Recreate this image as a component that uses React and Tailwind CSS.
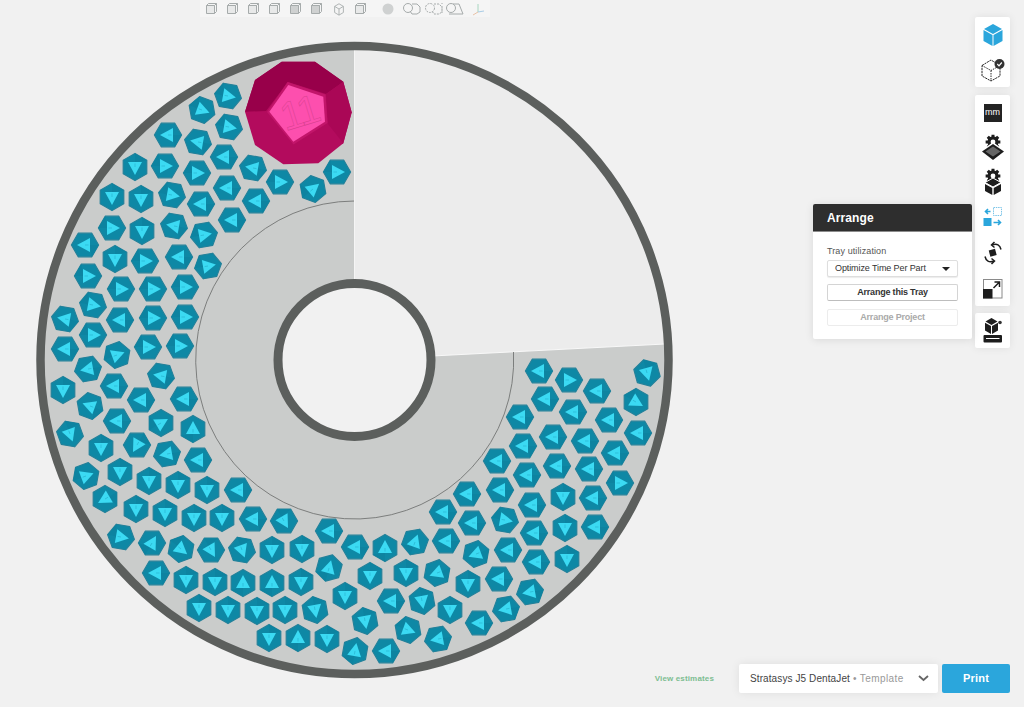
import React from "react";

const L = 180, R = 0, D = 90, U = 270;
const parts = [
  [228,96,10],[202,110,20],[229,127,10],[168,135,L],[198,142,190],[224,157,L],[253,168,190],[280,182,R],[313,189,320],[337,172,R],
  [135,167,D],[165,166,R],[197,173,R],[227,188,L],[256,201,L],[112,197,D],[141,199,D],[172,195,10],[201,204,L],[232,220,L],
  [112,228,R],[142,231,D],[174,226,190],[204,235,350],[85,245,L],[115,259,D],[145,261,R],[179,257,L],[208,266,350],[88,276,R],
  [121,289,R],[153,289,R],[185,287,R],[93,305,10],[120,320,L],[153,318,R],[185,317,R],[65,319,190],[93,335,R],[65,349,L],
  [117,355,340],[148,347,R],[180,346,R],[88,369,170],[161,376,190],[114,386,L],[63,390,D],[141,400,L],[184,399,L],[90,406,200],
  [117,421,L],[161,423,330],[193,429,U],[70,434,70],[101,448,D],[137,445,120],[167,454,170],[198,460,L],[86,476,340],[120,472,D],
  [149,481,D],[178,485,D],[207,490,D],[238,490,L],[105,499,150],[136,509,D],[165,513,D],[194,518,D],[222,518,D],[253,519,L],
  [284,521,60],[121,537,10],[152,543,300],[181,549,40],[211,550,60],[242,550,70],[272,550,D],[302,549,D],[329,531,L],[355,547,L],
  [156,573,L],[186,580,D],[215,582,D],[243,583,U],[272,583,U],[301,582,D],[329,568,285],[370,576,D],[199,608,D],[228,610,D],
  [257,611,D],[285,610,D],[315,610,80],[345,596,D],[365,621,80],[269,638,D],[298,638,U],[327,639,D],[355,651,280],
  [443,512,L],[385,548,U],[415,542,290],[446,541,L],[472,523,L],[505,520,10],[532,505,L],[534,533,L],[565,528,D],[476,554,160],
  [508,550,L],[536,562,L],[567,559,D],[406,573,D],[437,573,160],[468,584,D],[499,579,L],[530,592,170],[391,601,L],[422,601,80],
  [450,610,D],[506,609,170],[479,623,L],[408,630,20],[438,639,170],[386,651,L],[539,371,L],[569,380,R],[597,391,L],[647,373,75],
  [545,399,L],[573,412,L],[636,402,30],[609,420,L],[520,417,L],[638,433,L],[553,437,L],[585,441,L],[523,446,L],[615,453,L],
  [497,461,L],[557,466,L],[589,469,L],[527,475,L],[620,483,R],[500,490,L],[563,497,D],[593,498,L],[467,494,L],[595,527,L],
];

const hex = [0, 60, 120, 180, 240, 300].map((a) => [13.6 * Math.cos((a * Math.PI) / 180), 13.6 * Math.sin((a * Math.PI) / 180)]);
const hexPts = hex.map((p) => p.join(",")).join(" ");

function Part({ x, y, dir }) {
  return (
    <g transform={`translate(${x} ${y}) rotate(${dir})`}>
      <polygon points={hexPts} fill="#0e88a5" stroke="#23819a" strokeWidth="1.2" strokeLinejoin="round" />
      <polygon points={`${hex[3]} ${hex[4]} -5,0`} fill="#0d83a0" />
      <polygon points="8,0 -5,-7 -5,7" fill="#3bdaf3" />
      <line x1="-3.5" y1="0" x2="0" y2="0" stroke="#2cb9d4" strokeWidth="0.8" />
    </g>
  );
}

function gear(cx, cy, r, teeth = 8) {
  const pts = [];
  for (let i = 0; i < teeth; i++) {
    const a = (i / teeth) * Math.PI * 2;
    const s = Math.PI / teeth;
    const c = [[a - s * 0.5, r], [a + s * 0.5, r], [a + s * 0.75, r * 0.74], [a + s * 1.25, r * 0.74]];
    c.forEach(([t, q]) => pts.push(`${(cx + Math.cos(t) * q).toFixed(2)},${(cy + Math.sin(t) * q).toFixed(2)}`));
  }
  return pts.join(" ");
}

function Tray() {
  const cx = 354.5, cy = 360;
  return (
    <svg viewBox="0 17 680 690" className="block w-[680px] h-[690px] overflow-visible">
      <circle cx={cx} cy={cy} r="314" fill="#cacccb" />
      <path d="M354.5 360 L354.5 50 A310 310 0 0 1 665 344 Z" fill="#ececec" stroke="#f8f8f8" strokeWidth="1" />
      <path d="M354.5 201 A159 159 0 1 0 513.5 352" fill="none" stroke="#7c7e7d" strokeWidth="1" />
      <line x1="354.5" y1="50" x2="354.5" y2="280" stroke="#f5f5f5" strokeWidth="1" />
      <circle cx={cx} cy={cy} r="314" fill="none" stroke="#5c5f5d" strokeWidth="8.5" />
      <circle cx={cx} cy={cy} r="76.5" fill="#f1f1f1" stroke="#5c5f5d" strokeWidth="9" />
      {parts.map(([x, y, d], i) => (
        <Part key={i} x={x} y={y} dir={d} />
      ))}
      <polygon points="281.7,61.7 315,61.7 343.3,81.7 351.7,112.3 343.3,143.3 318.3,163.3 283.3,164.3 255,145 245,111.7 255,80" fill="#b30b5d" />
      <polygon points="245,111.7 255,80 281.7,61.7 315,61.7 343.3,81.7 326,94 288,82 266,111" fill="#98004a" />
      <polygon points="343.3,81.7 351.7,112.3 343.3,143.3 328,124 326,94" fill="#aa0756" />
      <polygon points="287.5,82 325.5,94.5 327.5,123 293.5,144.5 267,112" fill="#c2156a" />
      <polygon points="288.3,85 323.3,96.7 325,121.7 293.3,141.7 269.3,111.7" fill="#fd4fae" />
      <text x="299" y="127" fontFamily="'Liberation Sans', sans-serif" fontSize="40" fill="none" stroke="#d8408f" strokeWidth="0.5" letterSpacing="-2" textAnchor="middle" transform="rotate(-17 297 112)">11</text>
    </svg>
  );
}

const cubeLines = "M6 6 L6 13 L11 16 L16 13 L16 6 L11 3 Z M6 6 L11 9 L16 6 M11 9 L11 16";

function TopIcon({ kind }) {
  const stroke = "#a6abab";
  if (kind === "ball") {
    return (
      <svg width="14" height="14" viewBox="0 0 14 14">
        <circle cx="7" cy="7" r="5.5" fill="#cfd1d1" />
      </svg>
    );
  }
  if (kind === "axis") {
    return (
      <svg width="16" height="14" viewBox="0 0 16 14" fill="none" strokeWidth="1">
        <path d="M7 2 V10" stroke="#a8d6c0" />
        <path d="M7 10 L2 13" stroke="#e9c3a8" />
        <path d="M7 10 L13 9" stroke="#a9cce6" />
      </svg>
    );
  }
  if (kind === "iso") {
    return (
      <svg width="14" height="14" viewBox="3 1 16 16" fill="none" stroke={stroke} strokeWidth="1">
        <path d={cubeLines} />
      </svg>
    );
  }
  if (kind === "tri") {
    return (
      <svg width="20" height="14" viewBox="0 0 20 14" fill="none" stroke={stroke} strokeWidth="1">
        <circle cx="6" cy="6" r="4.5" />
        <path d="M8 2 L14 2 L18 12 L4 12" />
      </svg>
    );
  }
  if (kind === "two") {
    return (
      <svg width="20" height="14" viewBox="0 0 20 14" fill="none" stroke={stroke} strokeWidth="1">
        <circle cx="6" cy="6" r="4.5" />
        <path d="M10 2 H15 L18 5 V10 L15 12 H10 L8 9" />
      </svg>
    );
  }
  if (kind === "dash") {
    return (
      <svg width="20" height="14" viewBox="0 0 20 14" fill="none" stroke={stroke} strokeWidth="1">
        <circle cx="6" cy="6" r="4.5" strokeDasharray="2 1" />
        <path d="M10 2 H15 L18 5 V10 L15 12 H10 L8 9" strokeDasharray="2 1" />
        <path d="M18 1 V13" strokeDasharray="1 2" />
      </svg>
    );
  }
  return (
    <svg width="13" height="13" viewBox="0 0 13 13" fill={kind === "solid" ? "#cfd1d1" : "#e8e9e9"} stroke={stroke} strokeWidth="1">
      <path d="M1.5 3.5 H9.5 V11.5 H1.5 Z" />
      <path d="M1.5 3.5 L3.5 1.5 H11.5 V9.5 L9.5 11.5 M9.5 3.5 L11.5 1.5" fill="none" />
    </svg>
  );
}

function SideIcon({ children, h = "h-[35px]" }) {
  return <div className={`${h} flex items-center justify-center`}>{children}</div>;
}

export default function App() {
  const font = { fontFamily: "'Liberation Sans', Arial, sans-serif" };
  return (
    <div className="h-[707px] w-[1024px] bg-[#f1f1f1] overflow-hidden flex flex-col" style={font}>
      <div className="h-[17px] shrink-0 ml-[200px] w-[290px] bg-[#f5f5f5] flex items-center pl-[5px]">
        <span className="w-[21px]"><TopIcon /></span>
        <span className="w-[21px]"><TopIcon /></span>
        <span className="w-[21px]"><TopIcon /></span>
        <span className="w-[21px]"><TopIcon /></span>
        <span className="w-[21px]"><TopIcon kind="solid" /></span>
        <span className="w-[22px]"><TopIcon kind="solid" /></span>
        <span className="w-[22px]"><TopIcon kind="iso" /></span>
        <span className="w-[27px]"><TopIcon /></span>
        <span className="w-[21px]"><TopIcon kind="ball" /></span>
        <span className="w-[22px]"><TopIcon kind="two" /></span>
        <span className="w-[21px]"><TopIcon kind="dash" /></span>
        <span className="w-[26px]"><TopIcon kind="tri" /></span>
        <span className="w-[16px]"><TopIcon kind="axis" /></span>
      </div>

      <div className="flex-1 flex min-h-0">
        <div className="w-[645px] shrink-0">
          <Tray />
        </div>

        <div className="flex-1 flex flex-col items-end pr-[14px] pb-[14px]">
          <div className="w-[35px] h-[70px] bg-white rounded-[2px] shadow-[0_0_8px_rgba(0,0,0,0.08)] flex flex-col">
            <SideIcon>
              <svg width="22" height="24" viewBox="0 0 22 24">
                <polygon points="11,1 20,6 11,11 2,6" fill="#2ba6dc" />
                <polygon points="1.5,7 10.5,12 10.5,23 1.5,18" fill="#2ba6dc" />
                <polygon points="20.5,7 11.5,12 11.5,23 20.5,18" fill="#2ba6dc" />
              </svg>
            </SideIcon>
            <SideIcon>
              <svg width="26" height="24" viewBox="0 0 26 24" fill="none" stroke="#2a2a2a" strokeWidth="1">
                <path d="M2 7.5 L11 2 L20 7.5 V18 L11 23 L2 18 Z" strokeDasharray="2.2 0.7" />
                <path d="M2 7.5 L11 12.5 L20 7.5 M11 12.5 V23" strokeDasharray="1.5 1" />
                <circle cx="19.5" cy="6" r="5" fill="#333" stroke="none" />
                <path d="M17.3 6 L19 7.8 L21.8 4.5" stroke="#fff" strokeWidth="1.2" />
              </svg>
            </SideIcon>
          </div>

          <div className="relative mt-[8px] w-[35px] h-[211px] bg-white rounded-[2px] shadow-[0_0_8px_rgba(0,0,0,0.08)] flex flex-col">
            <div className="h-[36px] flex items-center justify-center">
              <div className="w-[18px] h-[18px] bg-[#232323] flex items-center justify-center text-white text-[9px] leading-none">mm</div>
            </div>
            <SideIcon>
              <svg width="26" height="28" viewBox="0 0 26 28">
                <polygon points={gear(13, 8, 7.5)} fill="#1d1d1d" />
                <circle cx="13" cy="8" r="2.4" fill="#fff" />
                <polygon points="13,8 25,17 13,26 1,17" fill="#fff" />
                <polygon points="13,10 24,17.5 13,26 2,17.5" fill="#1d1d1d" />
                <polygon points="13,12.5 20.5,17.5 13,22.5 5.5,17.5" fill="#666" />
              </svg>
            </SideIcon>
            <SideIcon>
              <svg width="22" height="28" viewBox="0 0 22 28">
                <polygon points={gear(11, 8, 7.5)} fill="#1d1d1d" />
                <circle cx="11" cy="8" r="2.4" fill="#fff" />
                <polygon points="11,10 19,14.5 11,19 3,14.5" fill="#1d1d1d" stroke="#fff" strokeWidth="1" />
                <polygon points="3,16 10.3,20 10.3,27 3,23" fill="#1d1d1d" />
                <polygon points="19,16 11.7,20 11.7,27 19,23" fill="#1d1d1d" />
              </svg>
            </SideIcon>
            <SideIcon>
              <svg width="20" height="20" viewBox="0 0 20 20">
                <rect x="10.5" y="0.5" width="8" height="8" fill="none" stroke="#7cc5e8" strokeWidth="1" strokeDasharray="1.5 0.8" />
                <rect x="0.5" y="11" width="8" height="8" fill="#2ba6dc" />
                <path d="M7.5 4.5 H2.5 M5 2 L2.5 4.5 L5 7" fill="none" stroke="#2ba6dc" strokeWidth="1.6" />
                <path d="M10.5 15.5 H17.5 M15 13 L17.5 15.5 L15 18" fill="none" stroke="#2ba6dc" strokeWidth="1.6" />
              </svg>
            </SideIcon>
            <div className="h-[38px] flex items-center justify-center">
              <svg width="20" height="24" viewBox="0 0 20 24" fill="none" stroke="#1d1d1d" strokeWidth="1.5">
                <rect x="6.5" y="8.5" width="6.5" height="6.5" fill="#1d1d1d" stroke="none" transform="rotate(-15 10 12)" />
                <path d="M9 4 C14 2 17 4 18 8.5" />
                <path d="M11.5 1 L8.5 4 L11.5 6.5" />
                <path d="M11 20 C6 22 3 20 2 15.5" />
                <path d="M8.5 23 L11.5 20 L8.5 17.5" />
              </svg>
            </div>
            <SideIcon>
              <svg width="20" height="20" viewBox="0 0 20 20">
                <rect x="0.5" y="0.5" width="18.5" height="18.5" fill="none" stroke="#8a8a8a" strokeWidth="1" />
                <rect x="0" y="10" width="9.5" height="9.5" fill="#1d1d1d" />
                <path d="M10.5 9 L16.5 3 M11.5 3 H16.5 V8" fill="none" stroke="#1d1d1d" strokeWidth="1.5" />
              </svg>
            </SideIcon>

            <div className="absolute right-[38px] top-[109px] w-[159px] h-[135px] bg-white rounded-[2px] shadow-[0_1px_8px_rgba(0,0,0,0.1)] flex flex-col">
              <div className="h-[28px] shrink-0 bg-[#2e2e2e] rounded-t-[2px] border-b border-[#8c8c8c] flex items-center px-[14px] text-white text-[12px] font-bold tracking-[0.1px]">Arrange</div>
              <div className="flex flex-col px-[14px] pt-[14px]">
                <div className="text-[9px] leading-[10px] text-[#555] tracking-[0.1px]">Tray utilization</div>
                <div className="mt-[4px] h-[17px] border border-[#dedede] rounded-[2px] bg-white flex items-center justify-between pl-[7px] pr-[7px] text-[9px] tracking-[-0.1px] text-[#333] shadow-[0_1px_1px_rgba(0,0,0,0.08)]">
                  <span>Optimize Time Per Part</span>
                  <span className="w-0 h-0 border-x-[4px] border-x-transparent border-t-[4px] border-t-[#222]" />
                </div>
                <div className="mt-[7px] h-[17px] border border-[#d4d4d4] border-b-[#bdbdbd] rounded-[2px] flex items-center justify-center text-[9px] font-bold tracking-[-0.2px] text-[#333]">Arrange this Tray</div>
                <div className="mt-[8px] h-[17px] border border-[#ececec] rounded-[2px] flex items-center justify-center text-[9px] font-bold tracking-[-0.2px] text-[#aaa]">Arrange Project</div>
              </div>
            </div>
          </div>

          <div className="mt-[7px] w-[35px] h-[35px] bg-white rounded-[2px] shadow-[0_0_8px_rgba(0,0,0,0.08)] flex items-center justify-center">
            <svg width="20" height="25" viewBox="0 0 20 25">
              <polygon points="8.5,0 14.5,3.5 8.5,7 2.5,3.5" fill="#1d1d1d" />
              <polygon points="2,4.7 8,8 8,16 2,12.5" fill="#1d1d1d" />
              <polygon points="15,4.7 9,8 9,16 15,12.5" fill="#1d1d1d" />
              <circle cx="17" cy="4.5" r="1.8" fill="#333" />
              <rect x="0.5" y="17" width="18.5" height="7.5" rx="1" fill="#1d1d1d" />
              <rect x="3" y="20" width="13.5" height="1" fill="#fff" />
            </svg>
          </div>

          <div className="mt-auto flex items-center w-full justify-end">
            <span className="text-[8px] font-bold tracking-[0.15px] text-[#7dbd92] mr-[25px]">View estimates</span>
            <div className="w-[199px] h-[29px] bg-white rounded-[2px] shadow-[0_0_10px_rgba(0,0,0,0.08)] flex items-center pl-[11px] pr-[9px] text-[10px]">
              <span className="text-[#444] tracking-[0.1px]">Stratasys J5 DentaJet</span>
              <span className="text-[#999] ml-[3px] tracking-[0.4px]">• Template</span>
              <svg className="ml-auto" width="11" height="7" viewBox="0 0 11 7" fill="none" stroke="#666" strokeWidth="1.8">
                <path d="M1 1 L5.5 5 L10 1" />
              </svg>
            </div>
            <div className="ml-[4px] w-[68px] h-[29px] bg-[#2ba6dc] rounded-[2px] flex items-center justify-center text-white text-[11px] font-bold tracking-[0.2px]">Print</div>
          </div>
        </div>
      </div>
    </div>
  );
}
